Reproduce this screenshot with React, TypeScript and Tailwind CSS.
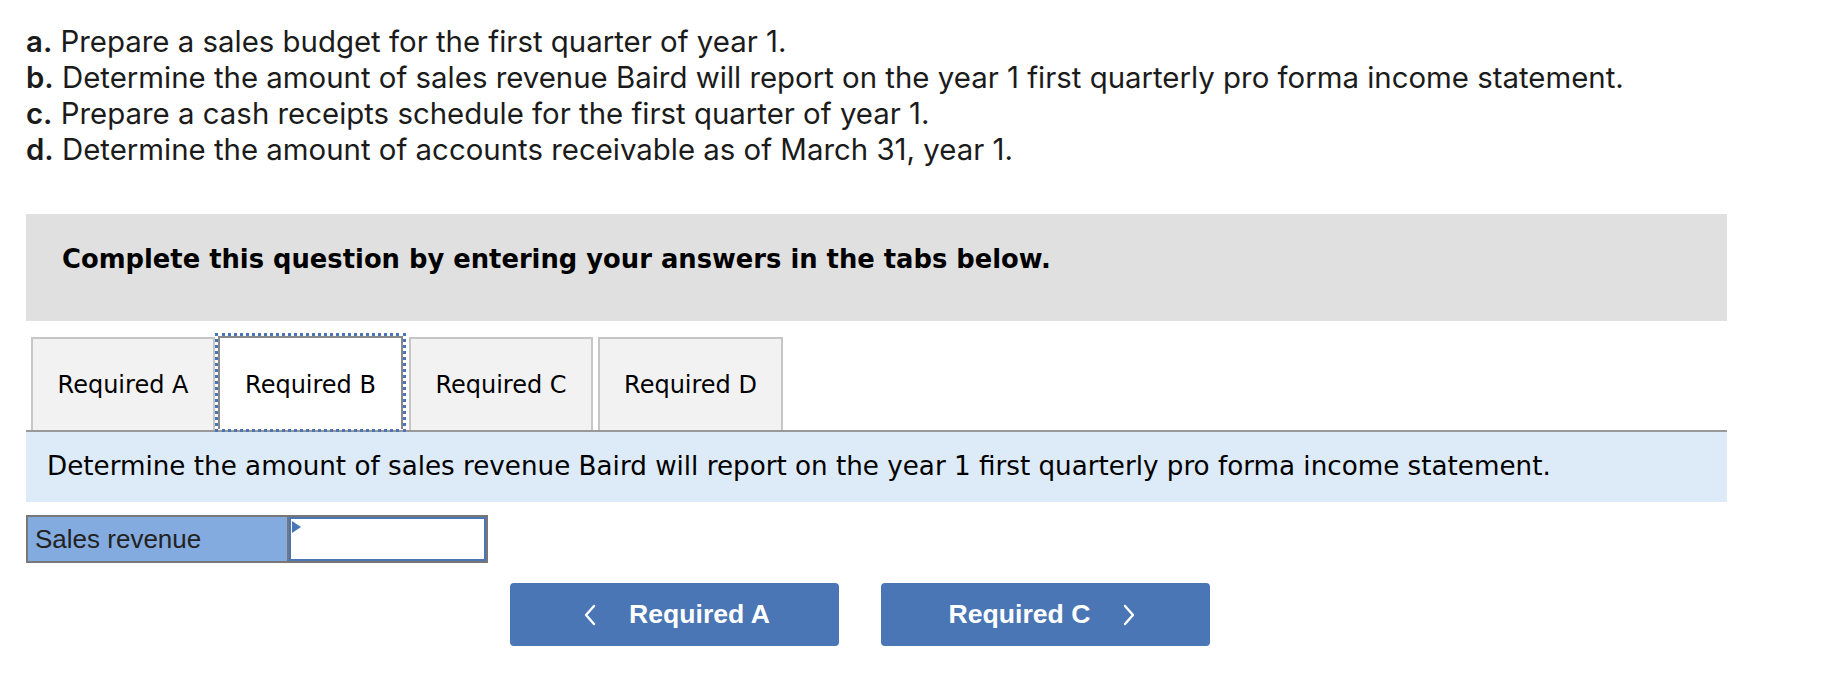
import React from "react";

const tabs = ["Required A", "Required B", "Required C", "Required D"];

function Chevron({ dir }: { dir: "left" | "right" }) {
  return (
    <svg width="12" height="22" viewBox="0 0 12 22" fill="none">
      <polyline
        points={dir === "left" ? "10,2 2,11 10,20" : "2,2 10,11 2,20"}
        stroke="white"
        strokeWidth="2.4"
        strokeLinejoin="round"
        strokeLinecap="round"
      />
    </svg>
  );
}

export default function App() {
  return (
    <main className="min-h-[676px] bg-white pl-[26px] pt-[24px] text-[#1b1b1b]">
      <ol className="font-['Inter',sans-serif] text-[29.4px] leading-[36px]">
        <li>
          <b className="font-semibold">a.</b> Prepare a sales budget for the first quarter of year 1.
        </li>
        <li>
          <b className="font-semibold">b.</b> Determine the amount of sales revenue Baird will report on the
          year 1 first quarterly pro forma income statement.
        </li>
        <li>
          <b className="font-semibold">c.</b> Prepare a cash receipts schedule for the first quarter of year 1.
        </li>
        <li>
          <b className="font-semibold">d.</b> Determine the amount of accounts receivable as of March 31, year 1.
        </li>
      </ol>

      <div className="mt-[46px] h-[107px] w-[1701px] bg-[#e0e0e0] pl-[36px] pt-[29px] font-['DejaVu_Sans',sans-serif] text-[25.8px] font-bold leading-[32px] text-black">
        Complete this question by entering your answers in the tabs below.
      </div>

      <div className="mt-[12px] flex w-[1701px] items-end border-b-2 border-[#999] font-['DejaVu_Sans',sans-serif] text-[24px] text-black">
        {tabs.map((t, i) =>
          i === 1 ? (
            <div
              key={t}
              className="mb-[-2px] h-[99px] w-[191px] border-[3px] border-dotted border-[#4a76b5]"
            >
              <div className="flex h-full items-center justify-center border-x-2 border-t-2 border-[#888] bg-white pt-[2px]">
                {t}
              </div>
            </div>
          ) : (
            <div
              key={t}
              className={`flex h-[93px] items-center justify-center border-x-2 border-t-2 border-[#c6c6c6] bg-[#f2f2f2] ${
                i === 0 ? "ml-[5px] w-[184px]" : i === 2 ? "ml-[3px] w-[184px]" : "ml-[5px] w-[185px]"
              }`}
            >
              {t}
            </div>
          )
        )}
      </div>

      <div className="flex h-[70px] w-[1701px] items-center bg-[#ddeaf7] pl-[21px] font-['DejaVu_Sans',sans-serif] text-[26.2px] text-black">
        Determine the amount of sales revenue Baird will report on the year 1 first quarterly pro forma income
        statement.
      </div>

      <div className="mt-[13px] flex font-['Liberation_Sans',sans-serif] text-[26px] text-[#222]">
        <div className="flex h-[48px] w-[263px] items-center border-2 border-[#777] bg-[#84abdf] pl-[7px]">
          Sales revenue
        </div>
        <div className="relative h-[48px] w-[199px] border-2 border-l-0 border-[#777]">
          <div className="h-full w-full border-2 border-[#4a76b5] bg-white" />
          <div className="absolute left-[3px] top-[4px] h-0 w-0 border-y-[6px] border-l-[9px] border-y-transparent border-l-[#4a76b5]" />
        </div>
      </div>

      <div className="ml-[484px] mt-[20px] flex gap-[42px] font-['Liberation_Sans',sans-serif] text-[26.6px] font-bold text-white">
        <button className="flex h-[63px] w-[329px] items-center justify-center gap-[33px] rounded-[4px] bg-[#4a76b5] pl-[5px]">
          <Chevron dir="left" />
          <span>Required A</span>
        </button>
        <button className="flex h-[63px] w-[329px] items-center justify-center gap-[33px] rounded-[4px] bg-[#4a76b5] pr-[7px]">
          <span>Required C</span>
          <Chevron dir="right" />
        </button>
      </div>
    </main>
  );
}
